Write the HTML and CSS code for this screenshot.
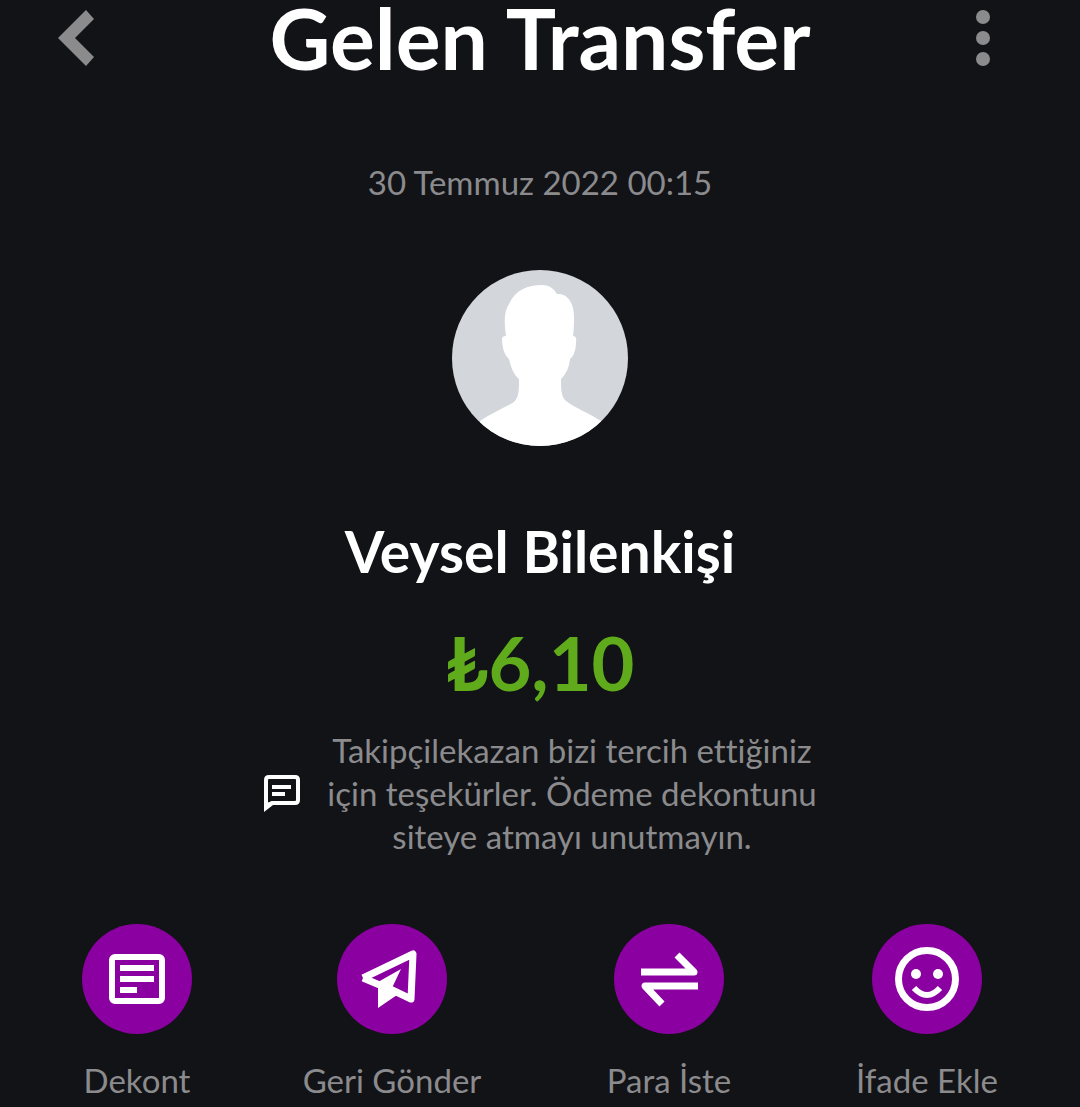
FILE: index.html
```html
<!doctype html>
<html lang="tr">
<head>
	<meta charset="UTF-8">
	<meta name="viewport" content="width=device-width, initial-scale=1">
	<title>Gelen Transfer</title>
	<link rel="stylesheet" href="styles.css">
</head>
<body>
	<header class="topbar">
		<button class="topbar-btn btn-back" type="button" aria-label="Geri">
			<svg width="36" height="56" viewBox="0 0 36 56"><path d="M28 0L36 9L17 28L36 47L28 56L0 28Z"/></svg>
		</button>
		<h1>Gelen Transfer</h1>
		<button class="topbar-btn" type="button" aria-label="Menü">
			<svg width="14" height="56" viewBox="0 0 14 56"><circle cx="7" cy="7" r="7"/><circle cx="7" cy="28" r="7"/><circle cx="7" cy="49" r="7"/></svg>
		</button>
	</header>
	<main class="transfer">
		<time class="date" datetime="2022-07-30T00:15">30 Temmuz 2022 00:15</time>
		<svg class="avatar" viewBox="0 0 176 176" aria-hidden="true">
			<path d="M28 151C40 143 52 138 62 132C67 127 67 120 67 109C62 105 59 98 57 89C52 85 50 76 50 69Q50 66 54 66C52 51 52 42 57 34C63 20 76 15 90 15C98 15 102 19 105 24C116 23 122 34 122 46C122 54 122 59 121 66Q125 66 124 72C124 79 122 86 118 89C117 98 114 104 109 109C109 118 109 127 114 131C123 138 137 143 149 151L149 176H28Z"/>
		</svg>
		<h2>Veysel Bilenkişi</h2>
		<p class="amount">₺6,10</p>
		<div class="message">
			<svg width="38" height="38" viewBox="0 0 38 38" aria-hidden="true">
				<path d="M3 31V5Q3 2 6 2H32Q35 2 35 5V25Q35 28 32 28H9Z" fill="none" stroke="#fff" stroke-width="4"/>
				<path d="M1 25V37L10 30Z" fill="#fff"/>
				<path d="M9 12H28M9 19H22" stroke="#fff" stroke-width="4"/>
			</svg>
			<p>Takipçilekazan bizi tercih ettiğiniz<br>için teşekürler. Ödeme dekontunu<br>siteye atmayı unutmayın.</p>
		</div>
	</main>
	<nav class="actions">
		<button class="action" type="button">
			<svg viewBox="0 0 110 110">
				<rect x="30" y="33" width="50" height="44" rx="3" fill="none" stroke="#fff" stroke-width="6"/>
				<path d="M38 44H72M38 55H72M38 66H55" stroke="#fff" stroke-width="6"/>
			</svg>
			<span>Dekont</span>
		</button>
		<button class="action" type="button">
			<svg viewBox="0 0 110 110">
				<path d="M26 54L76 30L74 75L51 64M26 54L45 62" fill="none" stroke="#fff" stroke-width="7" stroke-linejoin="round"/>
				<path d="M41 58L64 45L55 64L60 71L41 84Z" fill="#fff"/>
			</svg>
			<span>Geri Gönder</span>
		</button>
		<button class="action" type="button">
			<svg viewBox="0 0 110 110">
				<path d="M27 48H80L63 31M84 62H31L48 80" fill="none" stroke="#fff" stroke-width="7" stroke-linejoin="round"/>
			</svg>
			<span>Para İste</span>
		</button>
		<button class="action" type="button">
			<svg viewBox="0 0 110 110">
				<circle cx="55" cy="55" r="28.5" fill="none" stroke="#fff" stroke-width="7"/>
				<circle cx="44" cy="50" r="5" fill="#fff"/>
				<circle cx="66" cy="50" r="5" fill="#fff"/>
				<path d="M42 64Q55 78 68 64" fill="none" stroke="#fff" stroke-width="6"/>
			</svg>
			<span>İfade Ekle</span>
		</button>
	</nav>
</body>
</html>
```
FILE: styles.css
```css
*{
	box-sizing: border-box;
	margin: 0;
	padding: 0;
}
body{
	background: #121317;
	color: #8b8b8d;
	font-family: Lato, "Liberation Sans", sans-serif;
	font-variant-ligatures: none;
}
button{
	border: 0;
	background: none;
	color: inherit;
	font: inherit;
	cursor: pointer;
}
svg{
	display: block;
	flex: none;
}
.topbar{
	display: flex;
	align-items: center;
	justify-content: space-between;
	height: 118px;
	padding: 0 58px 43px;
}
.topbar h1{
	color: #fff;
	font-size: 84px;
	line-height: 76px;
}
.topbar-btn{
	display: flex;
	justify-content: center;
	width: 78px;
	fill: #8b8b8d;
}
.btn-back{
	justify-content: flex-start;
}
.transfer{
	display: flex;
	flex-direction: column;
	align-items: center;
	padding-top: 42px;
	text-align: center;
}
.date{
	font-size: 33px;
	line-height: 44px;
}
.avatar{
	width: 176px;
	height: 176px;
	margin-top: 66px;
	border-radius: 50%;
	background: #d3d6db;
	fill: #fff;
}
.transfer h2{
	margin-top: 69px;
	color: #fff;
	font-size: 57px;
	line-height: 72px;
}
.amount{
	margin-top: 32px;
	color: #5fab1b;
	font-size: 74px;
	font-weight: bold;
	line-height: 88px;
}
.message{
	display: flex;
	align-items: center;
	gap: 26px;
	margin-top: 22px;
	font-size: 33px;
	line-height: 43px;
}
.actions{
	display: grid;
	grid-template-columns: 234fr 276fr 278fr 238fr;
	margin-top: 66px;
	padding: 0 34px 0 20px;
}
.action{
	display: flex;
	flex-direction: column;
	align-items: center;
	gap: 24px;
	font-size: 33px;
	line-height: 44px;
}
.action svg{
	width: 110px;
	height: 110px;
	border-radius: 50%;
	background: #8b00a0;
}
```
